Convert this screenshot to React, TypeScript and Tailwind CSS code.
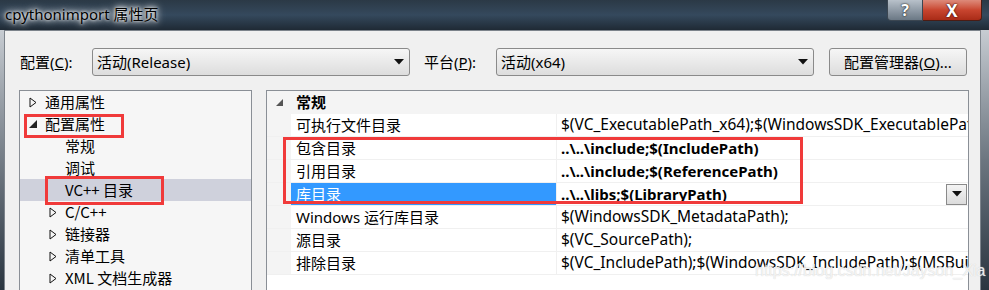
import React from "react"

const ui = "font-['Noto_Sans','Noto_Sans_CJK_SC',sans-serif]"
const cjk = "font-['Noto_Sans_CJK_SC',sans-serif]"

function Collapsed() {
  return (
    <svg width="8" height="11" viewBox="0 0 8 11" className="shrink-0">
      <polygon points="1,1 7,5.5 1,10" fill="none" stroke="#111" strokeWidth="1" />
    </svg>
  )
}

function Expanded({ color = "#222", size = 8 }: { color?: string; size?: number }) {
  return (
    <svg width={size} height={size} viewBox="0 0 8 8" className="shrink-0">
      <polygon points="8,0 8,8 0,8" fill={color} />
    </svg>
  )
}

function DownArrow() {
  return (
    <svg width="10" height="6" viewBox="0 0 10 6">
      <polygon points="0,0 10,0 5,5.5" fill="#111" />
    </svg>
  )
}

function Combo({ text, className }: { text: string; className: string }) {
  return (
    <div
      className={`${className} h-[28px] flex items-center justify-between pl-[4px] pr-[5px] rounded-[3px] border border-[#8a8a8a] bg-gradient-to-b from-[#f6f6f6] to-[#dddddd] text-[15px] text-black`}
    >
      <span>{text}</span>
      <DownArrow />
    </div>
  )
}

const treeItems = [
  { label: "通用属性", level: 0, kind: "collapsed" },
  { label: "配置属性", level: 0, kind: "expanded", box: "a" },
  { label: "常规", level: 1, kind: "leaf" },
  { label: "调试", level: 1, kind: "leaf" },
  { label: "VC++ 目录", level: 1, kind: "leaf", selected: true, box: "b" },
  { label: "C/C++", level: 1, kind: "collapsed" },
  { label: "链接器", level: 1, kind: "collapsed" },
  { label: "清单工具", level: 1, kind: "collapsed" },
  { label: "XML 文档生成器", level: 1, kind: "collapsed" },
]

function TreeRow({ item }: { item: (typeof treeItems)[number] }) {
  return (
    <div
      className={`relative h-[22px] flex items-center ${item.selected ? "bg-[#cfd1dc]" : ""} ${
        item.level === 0 ? "pl-[9px]" : "pl-[29px]"
      }`}
    >
      <span className="w-[8px] flex items-center">
        {item.kind === "collapsed" && <Collapsed />}
        {item.kind === "expanded" && <Expanded />}
      </span>
      <span className={`ml-[8px] text-[15px] text-black ${cjk}`}>{item.label}</span>
      {item.box === "a" && (
        <div className="absolute left-[4px] top-[1px] w-[100px] h-[24px] border-[3px] border-[#f03a3a]" />
      )}
      {item.box === "b" && (
        <div className="absolute left-[25px] top-[-3px] w-[119px] h-[29px] border-[3px] border-[#f03a3a]" />
      )}
    </div>
  )
}

type Prop = { name: string; value: string; bold?: boolean; selected?: boolean }

const before: Prop[] = [
  { name: "可执行文件目录", value: "$(VC_ExecutablePath_x64);$(WindowsSDK_ExecutablePath);$(VS_ExecutablePath)" },
]
const marked: Prop[] = [
  { name: "包含目录", value: "..\\..\\include;$(IncludePath)", bold: true },
  { name: "引用目录", value: "..\\..\\include;$(ReferencePath)", bold: true },
  { name: "库目录", value: "..\\..\\libs;$(LibraryPath)", bold: true, selected: true },
]
const after: Prop[] = [
  { name: "Windows 运行库目录", value: "$(WindowsSDK_MetadataPath);" },
  { name: "源目录", value: "$(VC_SourcePath);" },
  { name: "排除目录", value: "$(VC_IncludePath);$(WindowsSDK_IncludePath);$(MSBuild_ExecutablePath)" },
]

function PropRow({ p }: { p: Prop }) {
  return (
    <div className="flex h-[23px] border-b border-[#f0f0f0]">
      <div className="w-[24px] shrink-0 bg-[#f4f4f4]" />
      <div
        className={`w-[266px] shrink-0 flex items-center pl-[5px] border-r border-[#f0f0f0] text-[15px] ${
          p.selected ? "bg-[#3399ff] text-white" : "text-black"
        }`}
      >
        {p.name}
      </div>
      <div className="flex-1 min-w-0 flex items-center justify-between pl-[4px] overflow-hidden">
        <span className={`whitespace-nowrap text-black ${p.bold ? "font-bold text-[15px]" : "text-[15.5px]"}`}>
          {p.value}
        </span>
        {p.selected && (
          <div className="shrink-0 w-[21px] h-[21px] mr-[1px] flex items-center justify-center border border-[#8a8a8a] bg-gradient-to-b from-[#f4f4f4] to-[#dcdcdc]">
            <DownArrow />
          </div>
        )}
      </div>
    </div>
  )
}

export default function App() {
  return (
    <div className={`relative w-[989px] h-[290px] overflow-hidden flex flex-col bg-[#27333f] ${ui}`}>
      {/* title bar */}
      <div className="h-[30px] shrink-0 flex justify-between bg-gradient-to-b from-[#2b3946] via-[#35495d] to-[#1f2a35]">
        <div className="pl-[5px] pt-[3px] text-[15px] text-black [text-shadow:0_0_6px_#fff,0_0_10px_#fff,0_0_3px_#fff]">
          cpythonimport 属性页
        </div>
        <div className="flex h-[21px] mr-[7px]">
          <div className="w-[36px] flex items-center justify-center rounded-bl-[4px] border border-t-0 border-[#3b4651] bg-gradient-to-b from-[#b8c1ca] to-[#6b7885] text-white text-[16px] font-bold leading-none [text-shadow:0_0_2px_#222,0_0_1px_#222]">
            ?
          </div>
          <div className="w-[59px] flex items-center justify-center rounded-br-[4px] border border-l-0 border-t-0 border-[#4a1c14] bg-gradient-to-b from-[#dd8a7a] via-[#c8452f] to-[#a92b17] text-white text-[17px] font-bold leading-none [text-shadow:0_0_2px_#3a0a05,0_0_1px_#3a0a05]">
            X
          </div>
        </div>
      </div>

      <div className="flex flex-1 min-h-0">
        <div className="w-[4px] shrink-0 bg-gradient-to-b from-[#c7ccd2] to-[#2a3540]" />
        <div className="flex-1 min-w-0 flex flex-col bg-[#f0f0f0] border-l border-t border-r border-[#7c838b]">
          {/* configuration row */}
          <div className="h-[28px] mt-[17px] flex items-center text-[15px] text-black">
            <div className="w-[72px] pl-[15px] shrink-0 box-content">
              配置(<span className="underline">C</span>):
            </div>
            <Combo text="活动(Release)" className="w-[318px]" />
            <div className="w-[72px] ml-[14px] shrink-0">
              平台(<span className="underline">P</span>):
            </div>
            <Combo text="活动(x64)" className="w-[318px]" />
            <div className="ml-[15px] w-[138px] h-[28px] flex items-center justify-center rounded-[3px] border border-[#8a8a8a] bg-gradient-to-b from-[#f6f6f6] to-[#dddddd]">
              配置管理器(<span className="underline">O</span>)...
            </div>
          </div>

          {/* panels */}
          <div className="flex-1 min-h-0 mt-[14px] pl-[14px] flex gap-[14px]">
            <div className="w-[233px] shrink-0 border border-b-0 border-[#8a8f96] bg-[#f6f6f6]">
              {treeItems.map((it) => (
                <TreeRow key={it.label} item={it} />
              ))}
            </div>

            <div className="w-[703px] shrink-0 border border-b-0 border-[#8a8f96] bg-white">
              <div className="h-[23px] flex items-center bg-[#f4f4f4]">
                <span className="w-[29px] pl-[9px] flex items-center">
                  <Expanded color="#555" size={7} />
                </span>
                <span className="text-[15px] font-bold text-black">常规</span>
              </div>
              {before.map((p) => (
                <PropRow key={p.name} p={p} />
              ))}
              <div className="relative">
                {marked.map((p) => (
                  <PropRow key={p.name} p={p} />
                ))}
                <div className="absolute left-[16px] top-0 w-[520px] h-[67px] border-[3px] border-[#f03a3a]" />
              </div>
              {after.map((p) => (
                <PropRow key={p.name} p={p} />
              ))}
            </div>
          </div>
        </div>
        <div className="w-[8px] shrink-0 bg-gradient-to-b from-[#c7ccd2] via-[#6c7680] to-[#2a3540]" />
      </div>

      <div className="absolute left-[755px] top-[259px] text-[16px] text-white/75 [text-shadow:0_0_1px_#c8c8c8] whitespace-nowrap font-['Liberation_Sans',sans-serif]">
        https://blog.csdn.net/Jayson_Xia
      </div>
    </div>
  )
}
